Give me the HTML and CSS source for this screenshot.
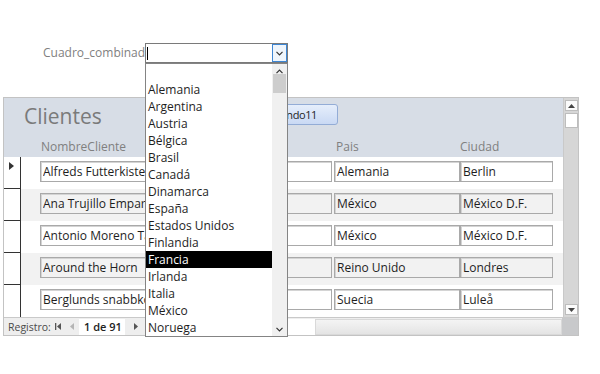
FILE: index.html
```html
<!DOCTYPE html>
<html lang="es">
<head>
<meta charset="utf-8">
<title>Clientes</title>
<link rel="stylesheet" href="styles.css">
</head>
<body>
<div class="combo-row">
  <span class="combo-label">Cuadro_combinad</span>
  <div class="combo">
    <span class="caret"></span>
    <span class="combo-btn"><svg width="7" height="5" viewBox="0 0 7 5"><polyline points="0.5,0.8 3.5,3.8 6.5,0.8" fill="none" stroke="#333" stroke-width="1.2"/></svg></span>
  </div>
</div>

<div class="form">
  <div class="form-main">
    <div class="form-body">
      <div class="header">
        <div class="title-row">
          <h1 class="title">Clientes</h1>
          <div class="cmd" role="button"><span class="cmd-text">Comando11</span></div>
        </div>
        <div class="labels">
          <span class="lbl lbl-nombre">NombreCliente</span>
          <span class="lbl lbl-pais">Pais</span>
          <span class="lbl lbl-ciudad">Ciudad</span>
        </div>
      </div>
      <div class="rows">
        <div class="row">
          <div class="selector current"><svg width="5" height="8" viewBox="0 0 5 8"><polygon points="0,0 5,4 0,8" fill="#333"/></svg></div>
          <div class="cells"><span class="box b-nombre"><span class="clip">Alfreds Futterkiste</span></span><span class="box b-pais">Alemania</span><span class="box b-ciudad">Berlin</span></div>
        </div>
        <div class="row alt">
          <div class="selector"></div>
          <div class="cells"><span class="box b-nombre"><span class="clip">Ana Trujillo Emparedados</span></span><span class="box b-pais">México</span><span class="box b-ciudad">México D.F.</span></div>
        </div>
        <div class="row">
          <div class="selector"></div>
          <div class="cells"><span class="box b-nombre"><span class="clip">Antonio Moreno Taquería</span></span><span class="box b-pais">México</span><span class="box b-ciudad">México D.F.</span></div>
        </div>
        <div class="row alt">
          <div class="selector"></div>
          <div class="cells"><span class="box b-nombre"><span class="clip">Around the Horn</span></span><span class="box b-pais">Reino Unido</span><span class="box b-ciudad">Londres</span></div>
        </div>
        <div class="row">
          <div class="selector"></div>
          <div class="cells"><span class="box b-nombre"><span class="clip">Berglunds snabbköp</span></span><span class="box b-pais">Suecia</span><span class="box b-ciudad">Luleå</span></div>
        </div>
      </div>
    </div>
    <div class="vscroll">
      <span class="sb-btn"><svg width="7" height="4" viewBox="0 0 7 4"><polygon points="0,4 3.5,0 7,4" fill="#444"/></svg></span>
      <span class="sb-thumb"></span>
      <span class="sb-space"></span>
      <span class="sb-btn"><svg width="7" height="4" viewBox="0 0 7 4"><polygon points="0,0 3.5,4 7,0" fill="#444"/></svg></span>
    </div>
  </div>
  <div class="navbar">
    <span class="nav-label">Registro:</span>
    <span class="nav-ico first"><svg width="6" height="7" viewBox="0 0 6 7"><rect x="0" y="0" width="1.3" height="7" fill="#555"/><polygon points="6,0 2,3.5 6,7" fill="#555"/></svg></span>
    <span class="nav-ico prev"><svg width="4" height="7" viewBox="0 0 4 7"><polygon points="4,0 0,3.5 4,7" fill="#b5b5b5"/></svg></span>
    <span class="nav-pos">1 de 91</span>
    <span class="nav-ico next"><svg width="4" height="7" viewBox="0 0 4 7"><polygon points="0,0 4,3.5 0,7" fill="#555"/></svg></span>
    <span class="nav-gap"></span>
    <span class="nav-search"></span>
    <span class="hscroll"></span>
    <span class="corner"></span>
  </div>
</div>

<div class="dropdown">
  <ul class="dd-list">
    <li class="dd-item">&nbsp;</li>
    <li class="dd-item">Alemania</li>
    <li class="dd-item">Argentina</li>
    <li class="dd-item">Austria</li>
    <li class="dd-item">Bélgica</li>
    <li class="dd-item">Brasil</li>
    <li class="dd-item">Canadá</li>
    <li class="dd-item">Dinamarca</li>
    <li class="dd-item">España</li>
    <li class="dd-item">Estados Unidos</li>
    <li class="dd-item">Finlandia</li>
    <li class="dd-item selected">Francia</li>
    <li class="dd-item">Irlanda</li>
    <li class="dd-item">Italia</li>
    <li class="dd-item">México</li>
    <li class="dd-item">Noruega</li>
  </ul>
  <div class="dd-scroll">
    <span class="dd-arrow"><svg width="7" height="5" viewBox="0 0 7 5"><polyline points="0.5,4.2 3.5,1.2 6.5,4.2" fill="none" stroke="#333" stroke-width="1.2"/></svg></span>
    <span class="dd-thumb"></span>
    <span class="dd-space"></span>
    <span class="dd-arrow"><svg width="7" height="5" viewBox="0 0 7 5"><polyline points="0.5,0.8 3.5,3.8 6.5,0.8" fill="none" stroke="#333" stroke-width="1.2"/></svg></span>
  </div>
</div>
</body>
</html>
```

FILE: styles.css
```css
* { box-sizing: border-box; }
html, body { margin: 0; padding: 0; }
body {
  width: 600px;
  height: 374px;
  position: relative;
  overflow: hidden;
  background: #fff;
  font-family: "Open Sans", "Noto Sans", sans-serif;
  font-size: 12px;
  color: #1e1e1e;
}

/* combo box */
.combo-row {
  display: flex;
  align-items: flex-start;
  padding: 43px 0 0 43px;
  height: 63px;
}
.combo-label {
  width: 102px;
  white-space: nowrap;
  color: #7f7f7f;
  line-height: 20px;
}
.combo {
  width: 143px;
  height: 20px;
  border: 1px solid #7a7a7a;
  background: #fff;
  display: flex;
  justify-content: space-between;
  align-items: flex-start;
}
.caret {
  width: 1px;
  height: 13px;
  margin: 3px 0 0 1px;
  background: #000;
}
.combo-btn {
  width: 15px;
  height: 18px;
  border: 1px solid #3d86d4;
  background: #eef5fc;
  display: flex;
  align-items: center;
  justify-content: center;
}

/* form */
.form {
  margin: 34px 0 0 3px;
  width: 576px;
  border: 1px solid #c3c3c3;
  background: #fff;
}
.form-main {
  display: flex;
  height: 219px;
}
.form-body {
  width: 559px;
}
.header {
  height: 59px;
  background: #d7dde6;
  padding-top: 6px;
}
.title-row {
  display: flex;
  align-items: center;
  height: 21px;
  padding-left: 20px;
}
.title {
  margin: 3px 0 0;
  width: 212px;
  font-size: 21px;
  font-weight: normal;
  line-height: 21px;
  color: #7a7a7a;
}
.cmd {
  width: 102px;
  height: 21px;
  padding-right: 20px;
  border: 1px solid #93acd6;
  border-radius: 3px;
  background: linear-gradient(#e6eefb, #c9d9f4);
  display: flex;
  align-items: center;
  justify-content: flex-end;
  font-size: 11px;
  letter-spacing: -0.4px;
  color: #1e1e1e;
  white-space: nowrap;
}
.labels {
  display: flex;
  margin-top: 14px;
  padding-left: 37px;
  line-height: 16px;
  color: #808080;
}
.lbl-nombre { width: 295px; }
.lbl-pais { width: 124px; }

.row {
  display: flex;
  height: 32px;
  background: #fff;
}
.row.alt { background: #f2f2f2; }
.selector {
  width: 17px;
  background: #fff;
  border-right: 1px solid #333;
  border-bottom: 1px solid #333;
  padding: 5px 0 0 5px;
}
.row:last-child .selector { border-bottom: none; }
.selector svg { display: block; }
.cells {
  display: flex;
  padding-top: 4px;
}
.box {
  height: 21px;
  border: 1px solid #a9a9a9;
  box-shadow: inset 1px 1px 0 #d4d4d4;
  background: #fff;
  padding-left: 2px;
  line-height: 19px;
  white-space: nowrap;
  overflow: hidden;
  color: #1e1e1e;
}
.clip {
  display: block;
  width: 102px;
  overflow: hidden;
  white-space: nowrap;
}
.row.alt .box { background: #f2f2f2; }
.b-nombre { margin-left: 19px; width: 292px; }
.b-pais { margin-left: 2px; width: 126px; }
.b-ciudad { width: 93px; }

.vscroll {
  width: 15px;
  background: #d6d6d6;
  border-left: 1px solid #c9c9c9;
  display: flex;
  flex-direction: column;
  align-items: center;
  padding: 2px 0 2px;
}
.sb-btn {
  width: 13px;
  height: 11px;
  background: #fbfbfb;
  border: 1px solid #bdbdbd;
  display: flex;
  align-items: center;
  justify-content: center;
}
.sb-thumb {
  width: 13px;
  height: 15px;
  margin-top: 2px;
  background: #fff;
  border: 1px solid #bdbdbd;
}
.sb-space { flex: 1; }

/* navigation bar */
.navbar {
  display: flex;
  align-items: center;
  height: 18px;
  border-top: 1px solid #c9c9c9;
  background: #eeeeee;
  font-size: 10.5px;
  color: #4a4a4a;
}
.nav-label { width: 51px; padding-left: 4px; white-space: nowrap; }
.nav-ico { display: flex; align-items: center; }
.nav-ico.first { width: 15px; }
.nav-ico.prev { width: 9px; }
.nav-pos {
  width: 46px;
  height: 16px;
  background: #fff;
  padding-left: 5px;
  line-height: 16px;
  font-size: 11px;
  font-weight: 600;
  color: #222;
}
.nav-ico.next { width: 15px; padding-left: 9px; }
.nav-gap { width: 110px; }
.nav-search {
  width: 65px;
  height: 16px;
  background: #fff;
}
.hscroll {
  flex: 1;
  height: 16px;
  border: 1px solid #d9d9d9;
  background: linear-gradient(#f4f4f4, #e4e4e4);
}
.corner {
  width: 16px;
  height: 17px;
  background: #c8c9cb;
}

/* dropdown list */
.dropdown {
  position: absolute;
  left: 145px;
  top: 63px;
  width: 143px;
  height: 274px;
  border: 1px solid #848484;
  background: #fff;
  display: flex;
}
.dd-list {
  list-style: none;
  margin: 0;
  padding: 0;
  width: 126px;
}
.dd-item {
  height: 17px;
  line-height: 17px;
  padding-left: 2px;
  white-space: nowrap;
  color: #1e1e1e;
}
.dd-item.selected { background: #000; color: #fff; }
.dd-scroll {
  width: 15px;
  background: #f0f0f0;
  display: flex;
  flex-direction: column;
  align-items: center;
}
.dd-arrow {
  height: 10px;
  display: flex;
  align-items: flex-end;
  justify-content: center;
  width: 14px;
}
.dd-arrow:last-child { align-items: center; height: 14px; }
.dd-thumb {
  width: 13px;
  height: 19px;
  background: #cdcdcd;
}
.dd-space { flex: 1; }
```
